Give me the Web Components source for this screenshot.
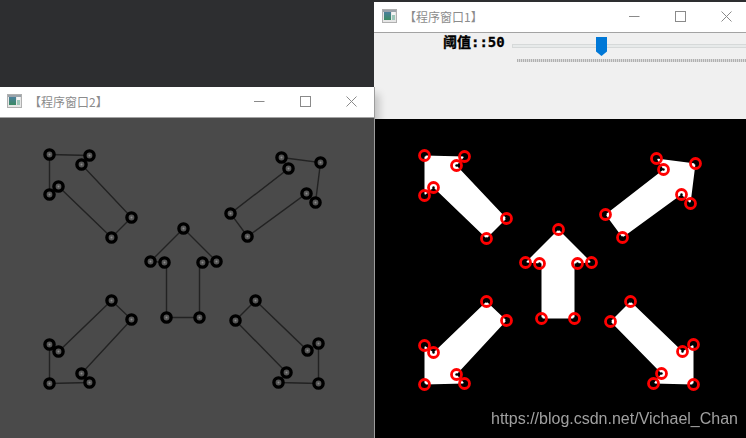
<!DOCTYPE html>
<html><head><meta charset="utf-8">
<style>html,body{margin:0;padding:0;background:#2d2e30}</style>
</head><body>
<desk-top>
  <app-window label="【程序窗口1】" style="left:374px;top:2px;width:372px;height:436px;--pad:8px;--gap:7px;--pr:14px">
    <track-bar label="阈值::50" value="50"></track-bar>
    <contour-view dark="0" ox="374" oy="119" w="372" h="319"></contour-view>
  </app-window>
  <app-window label="【程序窗口2】" front style="left:0;top:87px;width:374px;height:351px;--pad:7px;--gap:7px;--pr:17px">
    <contour-view dark="1" ox="0" oy="118" w="374" h="320"></contour-view>
  </app-window>
  <water-mark>https://blog.csdn.net/Vichael_Chan</water-mark>
</desk-top>
<script>
const CJK='"Noto Sans CJK SC","Liberation Sans",sans-serif';
class DeskTop extends HTMLElement{constructor(){super();this.attachShadow({mode:'open'}).innerHTML=`<style>:host{display:block;position:relative;width:746px;height:438px;overflow:hidden;background:#2d2e30}</style><slot></slot>`}}
customElements.define('desk-top',DeskTop);

class WinIcon extends HTMLElement{constructor(){super();this.attachShadow({mode:'open'}).innerHTML=`<style>:host{display:block;width:15px;height:14px;flex:none;margin-top:-2px}svg{display:block}</style>
<svg width="15" height="14" viewBox="0 0 15 14"><defs><linearGradient id="g" x1="0" y1="0" x2="0" y2="1"><stop offset="0" stop-color="#4a7f9c"/><stop offset="1" stop-color="#3a8a62"/></linearGradient></defs>
<rect x=".5" y=".5" width="14" height="13" fill="#e6e6e6" stroke="#b0b0b0"/><rect x="1" y="1" width="13" height="2" fill="#9aa3aa"/><rect x="2" y="3" width="7" height="8" fill="url(#g)"/><rect x="10" y="3" width="3" height="3" fill="#f4f4f4"/><rect x="10" y="6" width="3" height="5" fill="#9cc6b8"/></svg>`}}
customElements.define('win-icon',WinIcon);

class WinButtons extends HTMLElement{constructor(){super();this.attachShadow({mode:'open'}).innerHTML=`<style>:host{display:flex;margin-left:auto;gap:35px;align-items:center;padding-right:var(--pr,15px);margin-top:-2px}svg{display:block}</style>
<svg width="11" height="11" viewBox="0 0 11 11"><path d="M0 5.5H10.5" stroke="#8a8a8a" fill="none"/></svg>
<svg width="11" height="11" viewBox="0 0 11 11"><rect x=".5" y=".5" width="10" height="10" stroke="#8a8a8a" fill="none"/></svg>
<svg width="11" height="11" viewBox="0 0 11 11"><path d="M.5 .5L10.5 10.5M10.5 .5L.5 10.5" stroke="#8a8a8a" fill="none"/></svg>`}}
customElements.define('win-buttons',WinButtons);

class AppWindow extends HTMLElement{
 constructor(){super();this.attachShadow({mode:'open'}).innerHTML=`<style>
 :host{display:flex;flex-direction:column;position:absolute;background:#f0f0f0}
 :host([front]){z-index:2;border-right:1px solid #9d9d9d;box-shadow:7px 4px 8px -3px rgba(0,0,0,.2)}
 .bar{display:flex;align-items:center;box-sizing:border-box;height:31px;flex:none;background:#fff;border-bottom:1px solid #a3a3a3;padding-left:var(--pad,8px)}
 .t{font:12px/16px ${CJK};color:#8c8c8c;margin-left:var(--gap,5px);white-space:nowrap}
 </style><div class="bar"><win-icon></win-icon><span class="t"></span><win-buttons></win-buttons></div><slot></slot>`}
 connectedCallback(){this.shadowRoot.querySelector('.t').textContent=this.getAttribute('label')}
}
customElements.define('app-window',AppWindow);

class TrackBar extends HTMLElement{constructor(){super();this.attachShadow({mode:'open'}).innerHTML=`<style>
 :host{display:block;height:86px;flex:none;background:#f0f0f0;position:relative;overflow:hidden}
 .row{display:flex;align-items:flex-start;padding:0 0 0 69px}
 .l{font:bold 14px/18px "DejaVu Sans Mono",${CJK};color:#000;white-space:nowrap;width:69px;flex:none;-webkit-text-stroke:.3px #000}
 .col{flex:1;padding-top:11px}
 .track{box-sizing:border-box;height:4px;background:#e7eaea;border:1px solid #d6d9d9;border-right:0}
 .ticks{height:3px;margin:11px 0 0 5px;background:repeating-linear-gradient(90deg,#b0b0b0 0 1px,#dcdcdc 1px 2px)}
 svg{position:absolute;left:222px;top:4px;display:block}
 </style><div class="row"><span class="l"></span><div class="col"><div class="track"></div><div class="ticks"></div></div></div>
 <svg width="11" height="19" viewBox="0 0 11 19"><path d="M0 0H11V14.5L5.5 19L0 14.5Z" fill="#0078d7"/></svg>`}
 connectedCallback(){this.shadowRoot.querySelector('.l').textContent=this.getAttribute('label')}
}
customElements.define('track-bar',TrackBar);

/* pts: circled corner points; body: the outline actually filled, where it differs */
const SHAPES=[
 {pts:[[424,155],[464,156],[456,165],[506,218],[486,238],[433,187],[424,195]]},
 {pts:[[656,158],[695,163],[690,203],[681,194],[622,237],[605,214],[663,169]]},
 {pts:[[558,229],[591,262],[577,263],[574,318],[541,318],[539,263],[525,262]],
  body:[[558,229],[591,262],[574,263],[574,318],[541,318],[541,263],[525,262]]},
 {pts:[[486,301],[506,320],[456,374],[464,383],[424,384],[424,345],[433,352]]},
 {pts:[[630,301],[682,351],[693,344],[693,384],[653,383],[661,373],[610,321]]}
];
class ContourView extends HTMLElement{constructor(){super();this.attachShadow({mode:'open'})}
 connectedCallback(){
  const dark=this.getAttribute('dark')==='1',ox=+this.getAttribute('ox'),oy=+this.getAttribute('oy'),w=+this.getAttribute('w'),h=+this.getAttribute('h');
  const dx=(dark?-375:0)+.5,dy=(dark?-1:0)+.5;let s='';
  for(const sh of SHAPES){
   const pts=(sh.body||sh.pts).map(([x,y])=>(x+dx)+','+(y+dy)).join(' ');
   s+=dark?`<polygon points="${pts}" fill="none" stroke="#222" stroke-width="1.4"/>`:`<polygon points="${pts}" fill="#fff"/>`;
   for(const [x,y] of sh.pts){
    const X=x+dx,Y=y+dy;
    s+=dark?`<circle cx="${X}" cy="${Y}" r="4.6" fill="#555" stroke="#000" stroke-width="3.4"/><circle cx="${X}" cy="${Y}" r="1" fill="#8a8a8a"/>`
           :`<circle cx="${X}" cy="${Y}" r="5" fill="none" stroke="#f00" stroke-width="2.8"/><circle cx="${X}" cy="${Y}" r="1.2" fill="#000"/>`;
   }
  }
  this.shadowRoot.innerHTML=`<style>:host{display:block;flex:none;background:${dark?'#4a4a4a':'#000'}}svg{display:block}</style><svg width="${w}" height="${h}" viewBox="${ox} ${oy} ${w} ${h}">${s}</svg>`;
 }
}
customElements.define('contour-view',ContourView);

class WaterMark extends HTMLElement{constructor(){super();this.attachShadow({mode:'open'}).innerHTML=`<style>:host{display:block;position:absolute;left:491px;top:409px;z-index:3;font:16px/20px "Liberation Sans",Arial,sans-serif;color:#a0a0a0;white-space:nowrap;filter:blur(.35px)}</style><slot></slot>`}}
customElements.define('water-mark',WaterMark);
</script>
</body></html>
